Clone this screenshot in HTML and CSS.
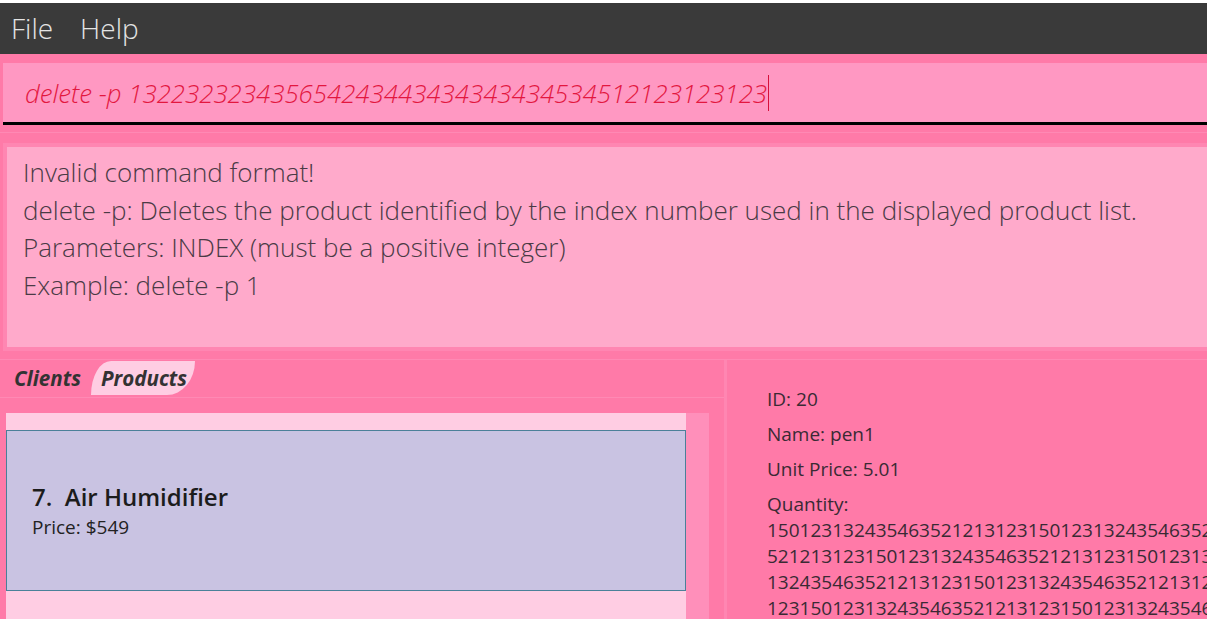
FILE: index.html
```html
<!DOCTYPE html>
<html>
<head>
<meta charset="utf-8">
<link rel="stylesheet" href="styles.css">
</head>
<body>
<div class="app">
  <div class="menubar">
    <span class="menu-item">File</span>
    <span class="menu-item">Help</span>
  </div>
  <div class="main">
    <div class="command"><span class="command-text">delete -p 132232323435654243443434343434534512123123123</span></div>
    <div class="result-wrap">
      <div class="result">
        <div>Invalid command format!</div>
        <div>delete -p: Deletes the product identified by the index number used in the displayed product list.</div>
        <div>Parameters: INDEX (must be a positive integer)</div>
        <div>Example: delete -p 1</div>
      </div>
    </div>
    <div class="lower">
      <div class="left">
        <div class="tabs">
          <span class="tab">Clients</span>
          <span class="tab tab-active">Products</span>
        </div>
        <div class="list-area">
          <div class="list">
            <div class="card">
              <div class="card-title">7.&nbsp; Air Humidifier</div>
              <div class="card-price">Price: $549</div>
            </div>
          </div>
          <div class="scroll-track"></div>
        </div>
      </div>
      <div class="right">
        <div class="field">ID: 20</div>
        <div class="field">Name: pen1</div>
        <div class="field">Unit Price: 5.01</div>
        <div class="field quantity">Quantity:<br>150123132435463521213123150123132435463521213123150123132435463521213123150123132435463521213123150123132435463521213123150123132435463521213123150123132435463521213123150123132435463521213123150123132435463521213123150123132435463521213123150123132435463521213123150123132435463521213123150123132435463521213123150123132435463521213123</div>
      </div>
    </div>
  </div>
</div>
</body>
</html>
```
FILE: styles.css
```css
html, body {
  margin: 0;
  padding: 0;
}
body {
  width: 1207px;
  height: 619px;
  overflow: hidden;
  background: #ffffff;
  font-family: "Open Sans", "Noto Sans", sans-serif;
}
.app {
  padding-top: 3px;
  height: 616px;
  display: flex;
  flex-direction: column;
}
.menubar {
  height: 51px;
  flex: none;
  background: #3a3a3a;
  display: flex;
  align-items: flex-start;
  padding-left: 11px;
  gap: 27px;
}
.menu-item {
  font-weight: 300;
  font-size: 28px;
  line-height: 50px;
  color: #e4e4e4;
}
.main {
  flex: 1;
  background: #ff7aa8;
  padding-top: 9px;
  display: flex;
  flex-direction: column;
  min-height: 0;
}
.command {
  flex: none;
  margin-left: 3px;
  height: 59px;
  background: #ff98c2;
  border-bottom: 3px solid #000;
  padding-left: 22px;
  font-style: italic;
  font-weight: 300;
  font-size: 25.8px;
  line-height: 60px;
  color: #e3173f;
  white-space: nowrap;
  overflow: hidden;
}
.command-text {
  border-right: 1px solid #d6103a;
  padding-right: 1px;
}
.result-wrap {
  flex: none;
  margin-top: 7px;
  border-top: 1px solid #ff89b4;
  padding-top: 10px;
}
.result {
  margin-left: 3px;
  border: 4px solid #ff86b2;
  border-right: 0;
  height: 193px;
  background: #ffaacb;
  padding: 7px 0 0 16px;
  box-sizing: content-box;
  font-weight: 300;
  font-size: 26px;
  line-height: 37.7px;
  color: #4a3a45;
  white-space: nowrap;
  overflow: hidden;
}
.lower {
  margin-top: 8px;
  border-top: 1px solid #ff89b4;
  display: flex;
  flex: 1;
  min-height: 0;
}
.left {
  width: 724px;
  flex: none;
  border-right: 3px solid #ff86b2;
  display: flex;
  flex-direction: column;
}
.tabs {
  height: 35px;
  flex: none;
  border-bottom: 1px solid #ff89b4;
  display: flex;
  align-items: flex-end;
  padding-left: 14px;
  padding-bottom: 2px;
  box-sizing: content-box;
}
.tab {
  font-weight: 700;
  font-style: italic;
  font-size: 20.6px;
  line-height: 34px;
  color: #333333;
}
.tab-active {
  margin-left: 10px;
  padding: 0 8px 0 10px;
  background: #ffcde3;
  border-radius: 20px 0 28px 0 / 34px 0 34px 0;
}
.list-area {
  margin-top: 15px;
  margin-left: 6px;
  display: flex;
  flex: 1;
}
.list {
  width: 680px;
  background: #ffcde3;
  padding-top: 17px;
}
.scroll-track {
  width: 23px;
  background: #ff8fba;
}
.card {
  height: 161px;
  border: 1px solid #4b8099;
  background: #c9c3e2;
  padding: 51px 0 0 25px;
  box-sizing: border-box;
}
.card-title {
  font-weight: 600;
  font-size: 24px;
  line-height: 30px;
  color: #1c1c1c;
}
.card-price {
  font-size: 19px;
  line-height: 31px;
  color: #222222;
}
.right {
  flex: 1;
  min-width: 0;
  overflow: hidden;
  padding: 26px 0 0 40px;
  font-size: 19px;
  line-height: 26px;
  color: #3a2a34;
}
.field {
  margin-bottom: 9px;
}
.quantity {
  width: 63.5ch;
  word-break: break-all;
}
```
